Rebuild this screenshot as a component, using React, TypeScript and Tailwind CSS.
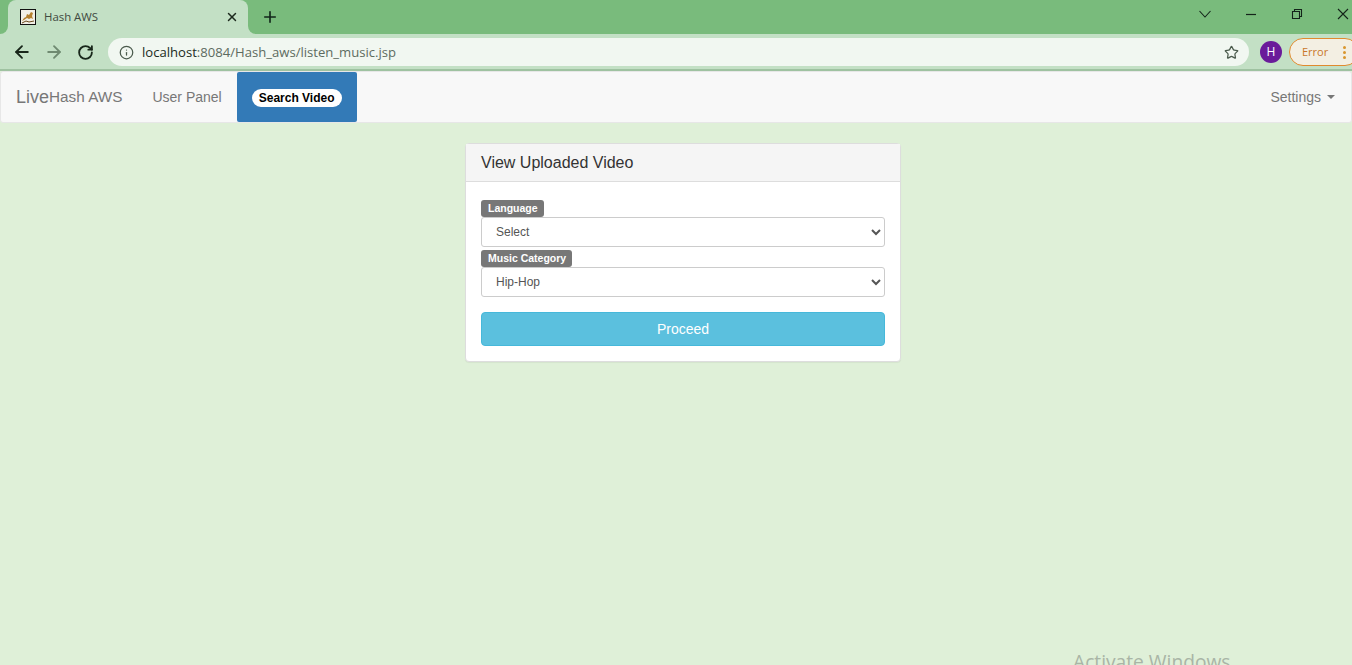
import { ArrowLeft, ArrowRight, Info, Plus, RotateCw, Star, X } from 'lucide-react';

const FieldLabel = ({ text }: { text: string }) => (
  <div className="flex">
    <span className="h-[17px] rounded-[3px] bg-[#777777] pl-[7px] pr-[6px] pt-[2px] text-[10.5px] font-bold leading-[13px] text-white">
      {text}
    </span>
  </div>
);

const Field = ({ label, value }: { label: string; value: string }) => (
  <div>
    <FieldLabel text={label} />
    <select
      defaultValue={value}
      className="block h-[30px] w-full rounded-[3px] border border-[#cccccc] bg-white pl-[10px] pr-[14px] text-[12px] text-[#555555]"
    >
      <option>{value}</option>
    </select>
  </div>
);

const TabBar = () => (
  <div className="flex h-[34px] items-center bg-[#79bb7c]">
    <div className="relative ml-2 flex h-[34px] w-[240px] shrink-0 items-center rounded-t-lg bg-[#c3e0c5] pl-3 pr-[9px]">
      <span className="absolute bottom-0 left-[-8px] h-2 w-2 bg-[#c3e0c5]">
        <span className="block h-2 w-2 rounded-br-lg bg-[#79bb7c]" />
      </span>
      <span className="absolute bottom-0 right-[-8px] h-2 w-2 bg-[#c3e0c5]">
        <span className="block h-2 w-2 rounded-bl-lg bg-[#79bb7c]" />
      </span>
      <svg width="16" height="16" viewBox="0 0 16 16" className="shrink-0">
        <rect x="0.5" y="0.5" width="15" height="15" fill="#f2efe6" stroke="#111111" />
        <path d="M2 12l2-3 2-1 1-3 2 1 2-3 2 1-1 3 1 3-2-1-2 1-2-1-3 2z" fill="#b5812f" />
        <path d="M2 14l4-2 3 1 5-1" stroke="#6b4a1e" fill="none" />
      </svg>
      <span className="ml-2 font-['Open_Sans',sans-serif] text-[11.4px] text-[#3f4a40]">Hash AWS</span>
      <X size={14} strokeWidth={2.5} className="ml-auto text-[#1d2a1e]" />
    </div>
    <Plus size={18} strokeWidth={2.2} className="ml-[13px] text-[#12261a]" />
    <div className="mb-[6px] ml-auto flex h-[22px] items-center text-[#14241a]">
      <svg width="14" height="14" viewBox="0 0 14 14" className="mr-[33px]">
        <path d="M1.500 4l5.500 6 5.500-6" fill="none" stroke="currentColor" strokeWidth="1.100" />
      </svg>
      <svg width="12" height="12" viewBox="0 0 12 12" className="mr-[34px]">
        <path d="M1 6.500h10" stroke="currentColor" strokeWidth="1.200" />
      </svg>
      <svg width="12" height="12" viewBox="0 0 12 12" className="mr-[34px]">
        <path d="M1.500 3.500h7v7h-7zM3.500 3.500v-2h7v7h-2" fill="none" stroke="currentColor" strokeWidth="1.100" />
      </svg>
      <svg width="12" height="12" viewBox="0 0 12 12" className="mr-[3px]">
        <path d="M1 1l10 10M11 1L1 11" stroke="currentColor" strokeWidth="1.100" />
      </svg>
    </div>
  </div>
);

const Toolbar = () => (
  <div className="flex h-[37px] items-center overflow-hidden border-b-2 border-[#9fc2a1] bg-[#c3e0c5] pt-[1px]">
    <ArrowLeft size={20} strokeWidth={2.2} className="ml-3 shrink-0 text-[#18261a]" />
    <ArrowRight size={20} strokeWidth={2.2} className="ml-[12px] shrink-0 text-[#6f8a71]" />
    <RotateCw size={17} strokeWidth={2.6} className="ml-[13px] shrink-0 text-[#18261a]" />
    <div className="ml-[14px] flex h-[28px] w-[1141px] shrink-0 items-center rounded-full bg-[#f1f7f1] pl-[11px] pr-[10px]">
      <Info size={15} strokeWidth={2} className="text-[#4a5a4c]" />
      <span className="ml-[8px] pt-[1px] font-['Open_Sans',sans-serif] text-[13.100px] text-[#5d6b5f]">
        <span className="text-[#202b21]">localhost</span>:8084/Hash_aws/listen_music.jsp
      </span>
      <Star size={15} strokeWidth={2} className="ml-auto text-[#4a5a4c]" />
    </div>
    <span className="ml-[11px] flex h-[22px] w-[22px] shrink-0 items-center justify-center rounded-full bg-[#6a1b9a] font-['Open_Sans',sans-serif] text-[12px] text-white">
      H
    </span>
    <div className="ml-[7px] flex h-[28px] w-[70px] shrink-0 items-center rounded-full border border-[#e08a2e] bg-[#f3efe3] pl-[12px] font-['Open_Sans',sans-serif] text-[11px] text-[#c9772a]">
      Error
      <span className="ml-[15px] flex flex-col gap-[2px]">
        <span className="h-[3px] w-[3px] rounded-full bg-[#d9962e]" />
        <span className="h-[3px] w-[3px] rounded-full bg-[#d9962e]" />
        <span className="h-[3px] w-[3px] rounded-full bg-[#d9962e]" />
      </span>
    </div>
  </div>
);

const Navbar = () => (
  <nav className="flex h-[52px] items-stretch rounded-[3px] border border-[#e7e7e7] bg-[#f8f8f8] text-[#777777]">
    <a className="flex items-center px-[15px]">
      <span className="text-[18px]">Live</span>
      <span className="text-[15.300px]">Hash AWS</span>
    </a>
    <a className="flex items-center px-[15px] text-[14px]">User Panel</a>
    <a className="flex items-center rounded-[2px] bg-[#337ab7] px-[15px] pt-[2px]">
      <span className="rounded-[10px] bg-white px-[7px] py-[3px] text-[12px] font-bold leading-[12px] text-black">
        Search Video
      </span>
    </a>
    <a className="ml-auto flex items-center pr-[16px] text-[14px]">
      <span className="translate-x-[1px]">Settings</span>
      <span className="ml-[7px] h-0 w-0 border-x-[4px] border-t-[4px] border-x-transparent border-t-[#777777]" />
    </a>
  </nav>
);

const App = () => (
  <div className="relative h-[665px] overflow-hidden bg-[#dff0d8] font-['Liberation_Sans',Arial,sans-serif] text-[14px] text-[#333333]">
    <TabBar />
    <Toolbar />
    <Navbar />
    <div className="mx-auto mt-[20px] w-[436px] translate-x-[7px] rounded-[4px] border border-[#dddddd] bg-white shadow-[0_1px_1px_rgba(0,0,0,0.05)]">
      <div className="flex h-[38px] items-center border-b border-[#dddddd] bg-[#f5f5f5] px-[15px] text-[16px]">
        View Uploaded Video
      </div>
      <div className="flex flex-col gap-[3px] px-[15px] pb-[15px] pt-[18px]">
        <Field label="Language" value="Select" />
        <Field label="Music Category" value="Hip-Hop" />
        <button className="mt-[12px] h-[34px] w-full rounded-[4px] border border-[#46b8da] bg-[#5bc0de] text-[14px] text-white">
          Proceed
        </button>
      </div>
    </div>
    <div className="absolute left-[1073px] top-[648px] font-['Open_Sans',sans-serif] text-[19.200px] text-[#a9b5a6]">
      Activate Windows
    </div>
  </div>
);

export default App;
